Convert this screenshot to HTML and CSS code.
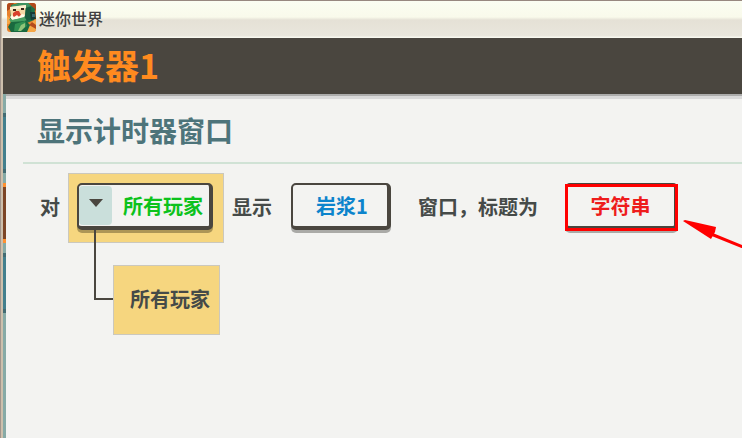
FILE: index.html
```html
<!DOCTYPE html>
<html lang="zh-CN">
<head>
<meta charset="utf-8">
<title>迷你世界</title>
<link rel="stylesheet" href="styles.css">
</head>
<body>
<div class="window">
  <header class="titlebar">
    <svg class="app-icon" viewBox="0 0 29 29" aria-hidden="true">
      <defs><clipPath id="r"><rect width="29" height="29" rx="3"/></clipPath></defs>
      <g clip-path="url(#r)">
        <rect width="29" height="29" fill="#e8822c"/>
        <path d="M0 0H7L3 6 0 8ZM22 0H29V8L26 5Z" fill="#b04a1d"/>
        <path d="M0 12L4 17 2 21H0ZM22 21L29 16V29H19Z" fill="#f6a746"/>
        <path d="M25 19L29 22V26L22 22Z" fill="#b54a1b"/>
        <path d="M4 2L12 0H21L28 6 27 17 20 20 9 20 3 16Z" fill="#1f7248"/>
        <path d="M5 2L13 0H21L24 3 18 5 4 5Z" fill="#3f9360"/>
        <path d="M3 4L19 2 18 12 12 14 4 15Z" fill="#f3d9a5"/>
        <path d="M3 4L19 2V5L3 7Z" fill="#faf0cf"/>
        <path d="M6 6H9V8H6ZM14 5H17V7H14Z" fill="#38251a"/>
        <path d="M6 10L9 8H12L14 12 11 14 6 14Z" fill="#d8402d"/>
        <path d="M3 14L5 12 7 14 10 12 12 14 15 11 18 12 17 15 5 17Z" fill="#fffbe6"/>
        <path d="M2 16L6 17 17 14 20 17 11 20 4 20Z" fill="#48a163"/>
        <path d="M19 5L24 4 25 16 20 18 18 14Z" fill="#165d3f"/>
        <path d="M23 9L28 9 29 16 24 17Z" fill="#173c38"/>
        <path d="M25 11H28V14H25Z" fill="#376b72"/>
        <path d="M4 19L19 18 23 22 20 29H4L1 24Z" fill="#19693f"/>
        <path d="M8 21L18 18 20 23 13 28 7 28Z" fill="#2f9152"/>
        <path d="M14 22L18 20 18 24 14 28 11 28Z" fill="#91c479"/>
      </g>
    </svg>
    <span class="app-name">迷你世界</span>
  </header>
  <div class="workspace">
    <h1 class="trigger-title">触发器1</h1>
    <div class="body">
      <div class="rail" aria-hidden="true">
        <i class="tab"></i><i class="tab tab-active"></i><i class="tab"></i>
      </div>
      <main class="panel">
        <h2 class="action-title">显示计时器窗口</h2>
        <div class="statement">
          <span class="word word-first">对</span>
          <div class="tree">
            <div class="node node-root">
              <label class="slot picker">
                <span class="caret"><svg viewBox="0 0 14 8" aria-hidden="true"><path d="M0 0H14L7 8Z"/></svg></span>
                <select class="picker-select" aria-label="玩家"><option>所有玩家</option></select>
              </label>
            </div>
            <div class="branch">
              <span class="elbow"></span>
              <div class="node node-child">所有玩家</div>
            </div>
          </div>
          <span class="word word-show">显示</span>
          <div class="cell"><button class="slot slot-timer" type="button">岩浆1</button></div>
          <span class="word word-window">窗口，标题为</span>
          <div class="cell cell-marked">
            <button class="slot slot-string" type="button">字符串</button>
            <svg class="arrow" viewBox="0 0 60 28" aria-hidden="true"><path class="arrow-line" d="M28 14L60 27"/><path class="arrow-head" d="M0 1L2 0 33 7 32 12 28 19Z"/></svg>
          </div>
        </div>
      </main>
    </div>
  </div>
</div>
</body>
</html>
```
FILE: styles.css
```css
*, *::before, *::after { box-sizing: border-box; }

body {
  margin: 0;
  background: #f3f3f1;
  color: #454a48;
  font-family: "Noto Sans CJK SC", sans-serif;
  overflow: hidden;
}

.window {
  display: flex;
  flex-direction: column;
  min-height: 100vh;
  border-top: 1px solid #988880;
  border-left: 1px solid #a1958c;
}

.titlebar {
  display: flex;
  align-items: center;
  gap: 3px;
  height: 37px;
  padding: 0 5px 4px;
  border-left: 1px solid #c9bfae;
  background: linear-gradient(#fbfdf2 0, #f9faeb 16px, #e5e1d6 19px, #e9e6dc 35px, #f8f8ef 36px);
}

.app-icon { width: 29px; height: 29px; }

.app-name {
  font-size: 16px;
  line-height: 24px;
  font-weight: 500;
  color: #404040;
}

.workspace {
  display: flex;
  flex: 1;
  flex-direction: column;
  border-left: 2px solid #cdbfac;
}

.trigger-title {
  margin: 0;
  padding: 0 34px 2px;
  background: #4a463f;
  color: #ff8a1f;
  font-size: 34px;
  line-height: 54px;
  font-weight: 700;
}

.body { display: flex; flex: 1; }

.rail {
  width: 3px;
  padding-top: 19px;
  background: #86aaa6;
}

.tab {
  display: block;
  height: 60px;
  margin-bottom: 10px;
  background: #427f8d;
  border: solid #426b73;
  border-width: 4px 0;
}

.tab-active {
  background: #7c4526;
  border-color: #ff9030;
}

.panel {
  flex: 1;
  min-width: 0;
  padding-left: 17px;
  border-top: 2px solid #adadac;
  background: linear-gradient(#dadada 3px, #f3f3f1 3px);
}

.action-title {
  margin: 0;
  padding: 14px 14px 12px;
  border-bottom: 2px solid #d0e2d5;
  color: #4d747a;
  font-size: 28px;
  line-height: 40px;
  font-weight: 700;
}

.statement {
  display: flex;
  align-items: flex-start;
  padding: 9px 0 0 17px;
  white-space: nowrap;
  font-size: 20px;
  line-height: 28px;
  font-weight: 700;
}

.word { line-height: 68px; }
.word-first { margin-right: 8px; }
.word-show { margin: 0 19px 0 8px; }
.word-window { margin: 0 27px; }

.node {
  background: #f6d67f;
  border: 1px solid #cbc8bd;
}

.node-root {
  width: 156px;
  height: 70px;
  padding: 9px 10px 9px 8px;
}

.branch {
  display: flex;
  margin: -13px 0 0 26px;
}

.elbow {
  width: 19px;
  height: 70px;
  border: solid #4a463f;
  border-width: 0 0 2px 2px;
  z-index: 1;
}

.node-child {
  height: 70px;
  margin-top: 35px;
  padding: 0 9px 0 16px;
  line-height: 66px;
}

.slot {
  height: 47px;
  margin: 0;
  padding: 0;
  border: solid #4a463f;
  border-width: 2px 4px 4px 2px;
  border-radius: 5px;
  background: #f3f3f1;
  font: inherit;
  box-shadow: 0 3px 0 #aaaaa7;
}

.picker {
  display: flex;
  align-items: center;
  box-shadow: 0 3px 0 #ad9656;
}

.caret {
  display: flex;
  align-items: center;
  justify-content: center;
  width: 33px;
  height: 39px;
  padding-bottom: 6px;
  border-radius: 4px;
  background: #cadfdb;
}

.caret svg { width: 14px; height: 8px; fill: #4a463f; }

.picker-select {
  flex: 1;
  min-width: 0;
  height: 100%;
  padding: 0 0 0 11px;
  appearance: none;
  border: 0;
  background: transparent;
  color: #0cc21c;
  font: inherit;
}

.cell { padding-top: 10px; }

.slot-timer {
  width: 100px;
  padding-left: 4px;
  color: #0c84cc;
}

.cell-marked { position: relative; }

.slot-string {
  width: 113px;
  color: #ee1c1c;
}

.cell-marked::after {
  content: "";
  position: absolute;
  inset: 11px 0 auto;
  height: 47px;
  border: 3px solid #f00;
}

.arrow {
  position: absolute;
  top: 47px;
  left: 118px;
  width: 60px;
  height: 28px;
}

.arrow-line { stroke: #f00; stroke-width: 3; }
.arrow-head { fill: #f00; }
```
